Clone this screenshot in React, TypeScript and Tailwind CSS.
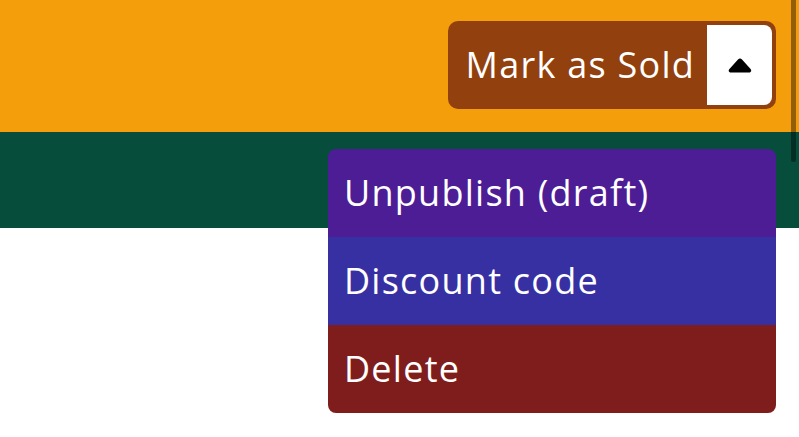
import React from "react";

export default function App() {
  const font = { fontFamily: '"Open Sans", "DejaVu Sans", sans-serif' };
  return (
    <div className="relative w-[799px] h-[437px] overflow-hidden bg-white font-normal tracking-[1.25px]" style={font}>
      <div className="h-[132px] bg-[#f59e0b] flex justify-end items-start pt-[21px] pr-[23px]">
        <div className="flex items-stretch rounded-[10px] bg-[#92400e] p-1 text-white">
          <span className="pl-[14px] pr-[12px] py-5 text-4xl leading-10">Mark as Sold</span>
          <span className="w-[65px] bg-white rounded-r-lg flex items-center justify-center">
            <svg width="26" height="17" viewBox="0 0 26 17">
              <path
                d="M13 1.5 Q12 1.5 11 2.6 L2.2 12.2 Q0.8 14 3 15.5 L23 15.5 Q25.2 14 23.8 12.2 L15 2.6 Q14 1.5 13 1.5 Z"
                fill="#000"
              />
            </svg>
          </span>
        </div>
      </div>
      <div className="h-[96px] bg-[#064e3b]" />
      <div className="absolute left-[328px] top-[149px] w-[448px] rounded-lg overflow-hidden text-white text-4xl leading-10">
        <div className="bg-[#4c1d95] px-4 py-6">Unpublish (draft)</div>
        <div className="bg-[#3730a3] px-4 py-6">Discount code</div>
        <div className="bg-[#7f1d1d] px-4 py-6">Delete</div>
      </div>
      <div className="absolute left-[791px] top-0 w-[5px] h-[162px] rounded-b-full bg-black/40" />
    </div>
  );
}
